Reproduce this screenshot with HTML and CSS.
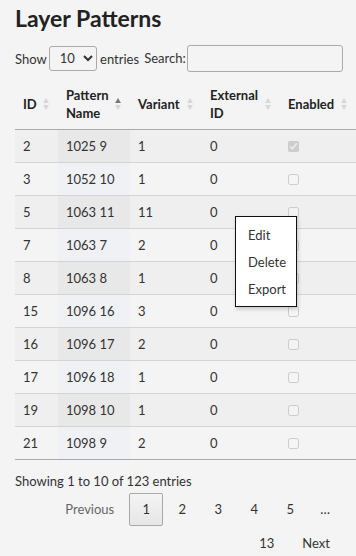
FILE: index.html
```html
<!DOCTYPE html>
<html lang="en">
<head>
    <meta charset="UTF-8">
    <meta name="viewport" content="width=device-width, initial-scale=1.0">
    <title>Layer Patterns</title>
    <link rel="stylesheet" href="styles.css">
</head>
<body>

<h1>Layer Patterns</h1>

<div class="controls">
    <label class="length">Show
        <select>
            <option>10</option>
            <option>25</option>
            <option>50</option>
        </select>
        entries</label>
    <label class="search">Search: <input type="search"></label>
</div>

<div class="table-wrap">
    <table class="patterns">
        <thead>
            <tr>
                <th class="col-id sortable">ID</th>
                <th class="col-name sortable sorted">Pattern Name</th>
                <th class="col-variant sortable">Variant</th>
                <th class="col-ext sortable">External ID</th>
                <th class="col-enabled sortable">Enabled</th>
            </tr>
        </thead>
        <tbody>
            <tr><td>2</td><td class="sort-col">1025 9</td><td>1</td><td>0</td><td><input type="checkbox" checked disabled></td></tr>
            <tr><td>3</td><td class="sort-col">1052 10</td><td>1</td><td>0</td><td><input type="checkbox" disabled></td></tr>
            <tr><td>5</td><td class="sort-col">1063 11</td><td>11</td><td>0</td><td><input type="checkbox" disabled></td></tr>
            <tr><td>7</td><td class="sort-col">1063 7</td><td>2</td><td>0</td><td><input type="checkbox" disabled></td></tr>
            <tr><td>8</td><td class="sort-col">1063 8</td><td>1</td><td>0</td><td><input type="checkbox" disabled></td></tr>
            <tr><td>15</td><td class="sort-col">1096 16</td><td>3</td><td>0</td><td><input type="checkbox" disabled></td></tr>
            <tr><td>16</td><td class="sort-col">1096 17</td><td>2</td><td>0</td><td><input type="checkbox" disabled></td></tr>
            <tr><td>17</td><td class="sort-col">1096 18</td><td>1</td><td>0</td><td><input type="checkbox" disabled></td></tr>
            <tr><td>19</td><td class="sort-col">1098 10</td><td>1</td><td>0</td><td><input type="checkbox" disabled></td></tr>
            <tr><td>21</td><td class="sort-col">1098 9</td><td>2</td><td>0</td><td><input type="checkbox" disabled></td></tr>
        </tbody>
    </table>
</div>

<div class="info">Showing 1 to 10 of 123 entries</div>

<div class="paginate">
    <a class="page-btn disabled">Previous</a>
    <a class="page-btn current">1</a>
    <a class="page-btn">2</a>
    <a class="page-btn">3</a>
    <a class="page-btn">4</a>
    <a class="page-btn">5</a>
    <span class="ellipsis">…</span>
    <a class="page-btn">13</a>
    <a class="page-btn">Next</a>
</div>

<!-- Right-click menu -->
<ul class="context-menu">
    <li>Edit</li>
    <li>Delete</li>
    <li>Export</li>
</ul>

</body>
</html>
```

FILE: styles.css
```css
body {
    font-family: "Segoe UI", "Lato", sans-serif;
    font-size: 13px;
    color: #333;
    background: #f4f4f4;
    margin: 0;
    padding: 0 13px 0 15px;
    overflow: hidden;
    position: relative;
}

h1 {
    font-size: 23px;
    font-weight: bold;
    color: #222;
    margin: 3px 0 11px;
    line-height: 30px;
}

/* Length + search */
.controls {
    display: flex;
    justify-content: space-between;
    align-items: center;
    height: 28px;
}

.length select {
    width: 48px;
    height: 25px;
    margin: 0 0 0 -1px;
    padding: 0 4px 0 6px;
    font-family: inherit;
    font-size: 13px;
    color: #333;
    background: #f4f4f4;
    border: 1px solid #aaa;
    border-radius: 3px;
}

.search input {
    width: 156px;
    height: 27px;
    margin-left: -2px;
    box-sizing: border-box;
    background: transparent;
    border: 1px solid #aaa;
    border-radius: 3px;
}

/* Table */
.table-wrap {
    margin-top: 8px;
    width: 341px;
}

.patterns {
    border-collapse: collapse;
    table-layout: fixed;
    width: 341px;
}

.patterns th,
.patterns td {
    box-sizing: border-box;
}

.col-id { width: 43px; }
.col-name { width: 72px; }
.col-variant { width: 72px; }
.col-ext { width: 78px; }
.col-enabled { width: 76px; }

.patterns th {
    position: relative;
    text-align: left;
    font-weight: bold;
    color: #222;
    line-height: 18px;
    padding: 6px 18px 6px 8px;
    height: 49px;
    border-bottom: 1px solid #a9a9a9;
}

/* sort arrows */
.sortable::before,
.sortable::after {
    content: "";
    position: absolute;
    right: 9px;
    width: 0;
    height: 0;
    border-left: 3.5px solid transparent;
    border-right: 3.5px solid transparent;
}

.sortable::before {
    top: 50%;
    margin-top: -6px;
    border-bottom: 5px solid #d8d8d8;
}

.sortable::after {
    top: 50%;
    margin-top: 1px;
    border-top: 5px solid #d8d8d8;
}

.sorted::before {
    border-bottom-color: #7a7a7a;
}

.patterns td {
    padding: 8px;
    line-height: 16px;
    border-top: 1px solid #d4d4d4;
    white-space: nowrap;
}

.patterns tbody tr:first-child td {
    border-top: none;
}

.patterns tbody tr:last-child td {
    border-bottom: 1px solid #a9a9a9;
}

.patterns tbody tr:nth-child(odd) {
    background: #efefef;
}

.patterns tbody tr:nth-child(odd) .sort-col {
    background: #e8e8e8;
}

.patterns tbody tr:nth-child(even) .sort-col {
    background: #f0f1f5;
}

.patterns input[type="checkbox"] {
    margin: 0;
    width: 11px;
    height: 11px;
    vertical-align: -1px;
}

/* Footer */
.info {
    padding-top: 11px;
    line-height: 20px;
}

.paginate {
    display: flex;
    flex-wrap: wrap;
    justify-content: flex-end;
    row-gap: 1px;
    padding-top: 2px;
}

.page-btn {
    box-sizing: border-box;
    min-width: 34px;
    padding: 7px 12px;
    margin-left: 2px;
    line-height: 17px;
    text-align: center;
    color: #333;
    border: 1px solid transparent;
    border-radius: 2px;
    cursor: pointer;
}

.page-btn.disabled {
    color: #666;
    cursor: default;
}

.page-btn.current {
    border-color: #a8a8a8;
    background: linear-gradient(to bottom, #f4f4f4 0%, #e6e6e6 100%);
}

.ellipsis {
    padding: 8px 13px 0;
    line-height: 17px;
}

/* Context menu */
.context-menu {
    position: absolute;
    left: 235px;
    top: 216px;
    width: 60px;
    margin: 0;
    padding: 5px 0 3px;
    list-style: none;
    background: #fff;
    border: 1px solid #111;
    box-shadow: 1px 2px 4px rgba(0, 0, 0, 0.2);
}

.context-menu li {
    padding: 0 0 0 12px;
    line-height: 27px;
    color: #333;
    cursor: pointer;
}
```
